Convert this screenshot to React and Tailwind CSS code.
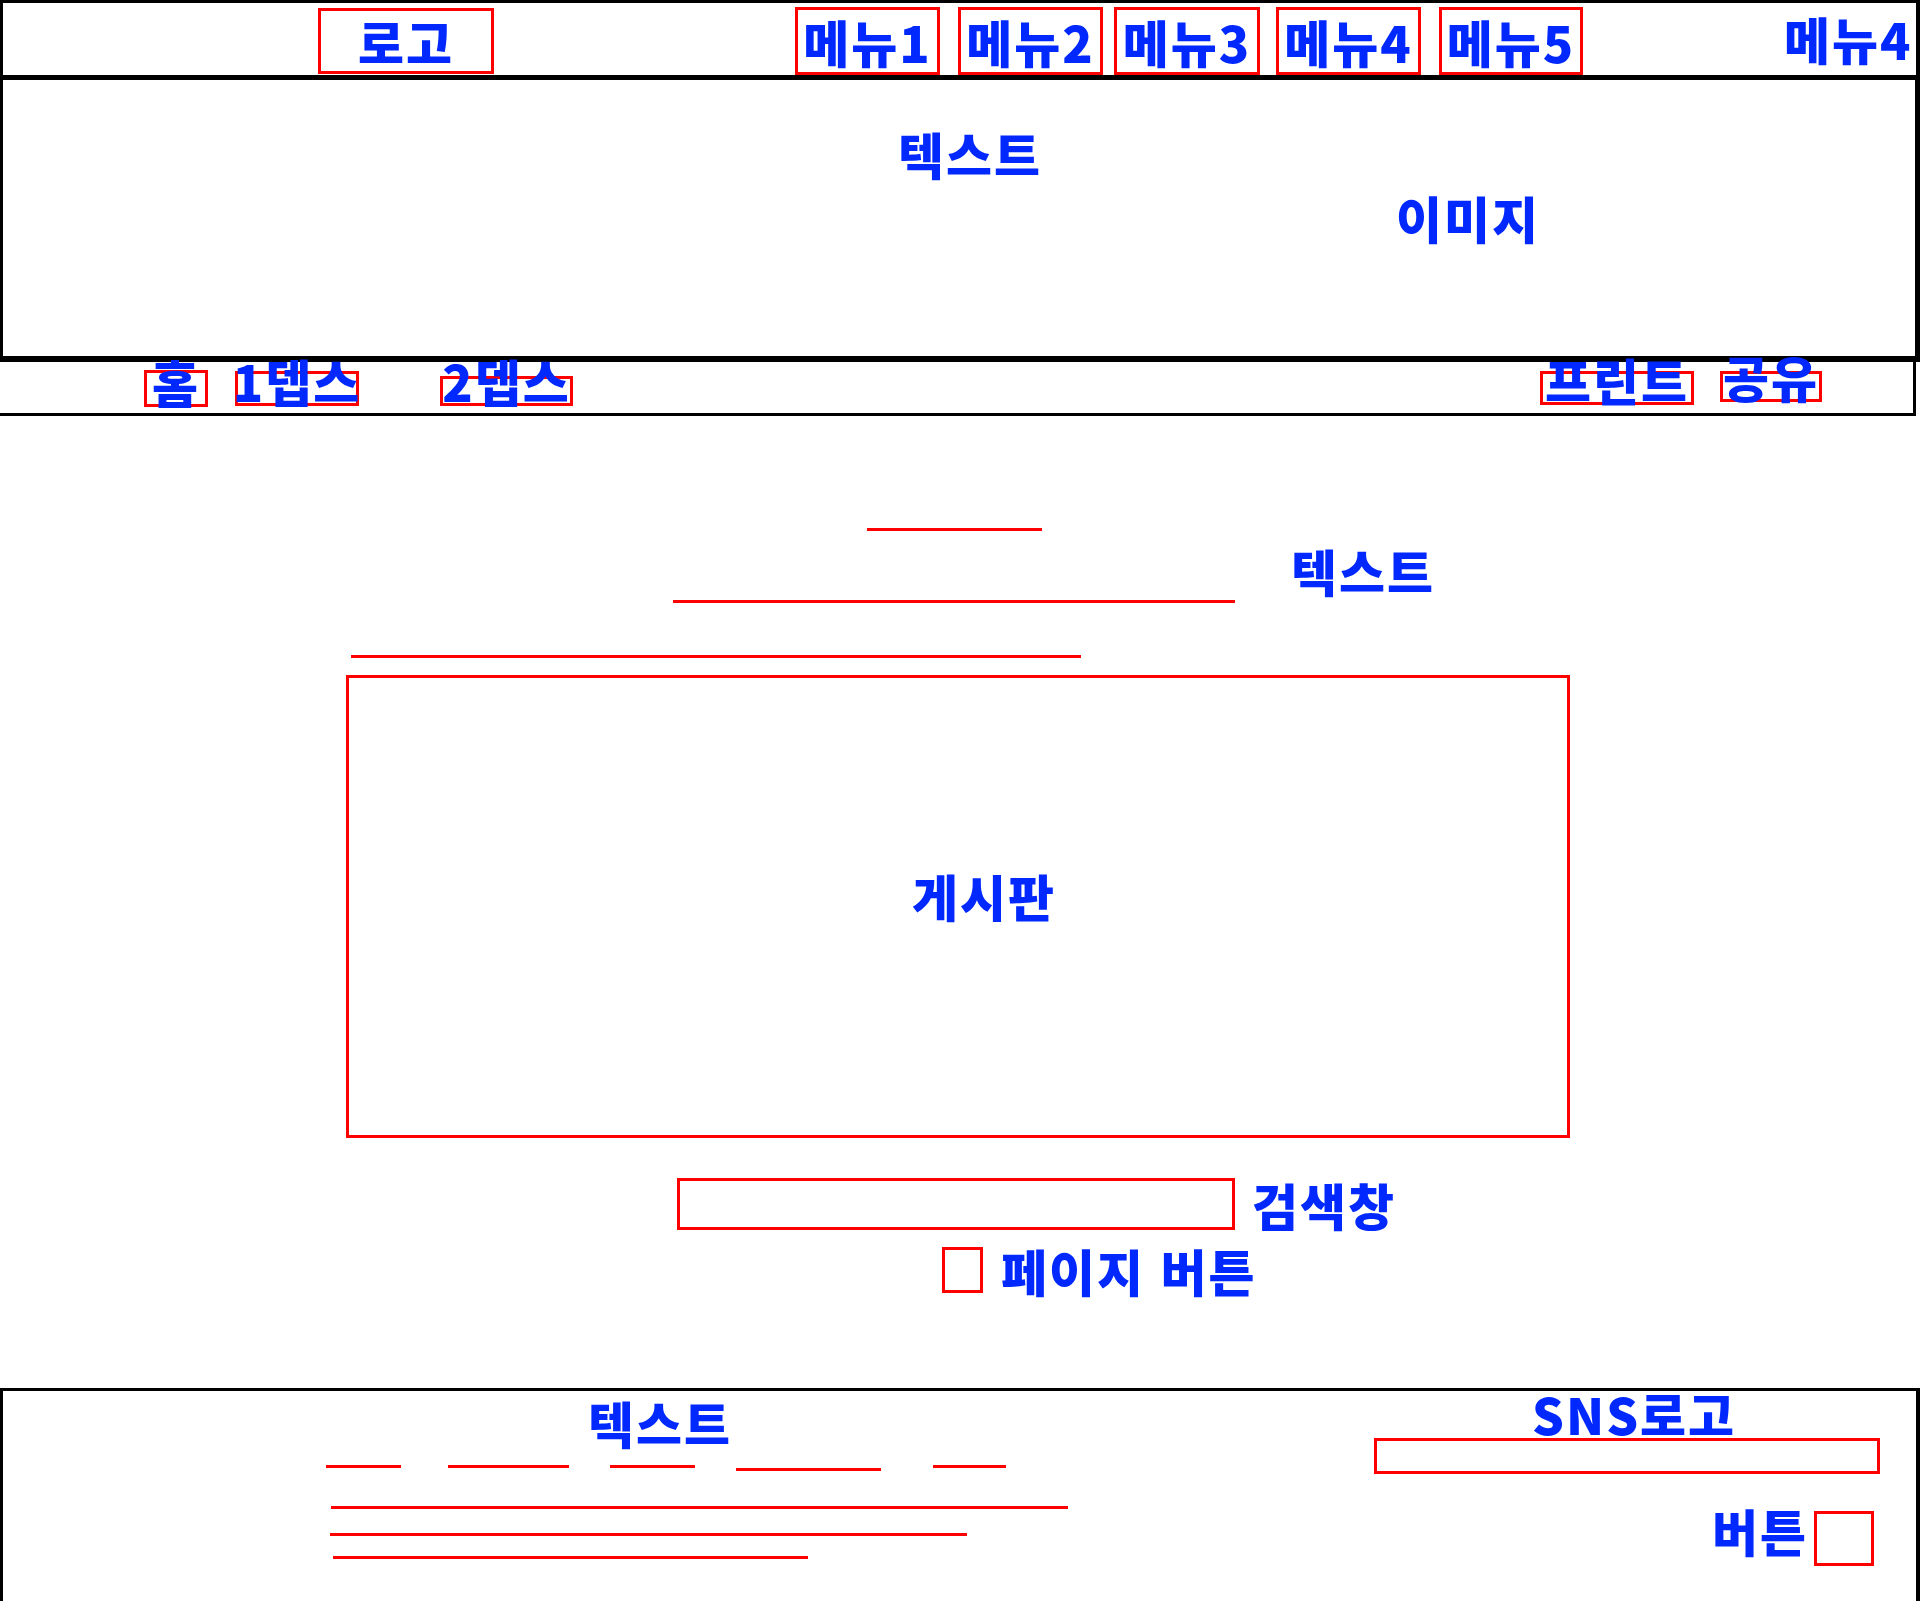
import React from 'react'

const T = ({ children, className = '' }) => (
  <span className={`block leading-none text-[50px] tracking-[2px] font-black text-[#0028ff] whitespace-nowrap ${className}`}>
    {children}
  </span>
)

const Line = ({ className = '' }) => <div className={`h-[3px] bg-[#ff0000] ${className}`} />

const menus = [
  { label: '메뉴1', cls: 'ml-[301px] w-[145px]' },
  { label: '메뉴2', cls: 'ml-[18px] w-[145px]' },
  { label: '메뉴3', cls: 'ml-[11px] w-[146px]' },
  { label: '메뉴4', cls: 'ml-[16px] w-[145px]' },
  { label: '메뉴5', cls: 'ml-[18px] w-[144px]' }
]

const crumbs = [
  { label: '홈', cls: 'ml-[144px] w-[64px] h-[37px] mt-[8px]' },
  { label: '1뎁스', cls: 'ml-[27px] w-[124px] h-[35px] mt-[9px]' },
  { label: '2뎁스', cls: 'ml-[81px] w-[133px] h-[30px] mt-[14px]' },
  { label: '프린트', cls: 'ml-[967px] w-[154px] h-[34px] mt-[9px]' },
  { label: '공유', cls: 'ml-[26px] w-[102px] h-[31px] mt-[9px]' }
]

export default function App() {
  return (
    <div className="w-[1920px] h-[1601px] bg-white flex flex-col overflow-hidden font-['Noto_Sans_CJK_KR',sans-serif]">
      {/* Header */}
      <header className="h-[75px] shrink-0 border-t-[3px] border-l-[3px] border-r-[4px] border-black flex items-start">
        <div className="ml-[315px] mt-[5px] w-[176px] h-[66px] border-[3px] border-[#ff0000] flex items-center justify-center">
          <T>로고</T>
        </div>
        {menus.map(m => (
          <div key={m.label} className={`${m.cls} mt-[4px] h-[68px] border-[3px] border-[#ff0000] flex items-center justify-center`}>
            <T>{m.label}</T>
          </div>
        ))}
        <T className="ml-[201px] mt-[10px]">메뉴4</T>
      </header>

      {/* Hero */}
      <section className="h-[287px] shrink-0 border-t-[5px] border-b-[6px] border-l-[3px] border-r-[5px] border-black">
        <T className="ml-[895px] mt-[48px]">텍스트</T>
        <T className="ml-[1393px] mt-[14px]">이미지</T>
      </section>

      {/* Breadcrumb */}
      <nav className="h-[54px] w-[1916px] shrink-0 border-b-[3px] border-r-[3px] border-black flex items-start">
        {crumbs.map(c => (
          <div key={c.label} className={`${c.cls} border-[3px] border-[#ff0000] flex items-end justify-center`}>
            <T className="-mb-[2px]">{c.label}</T>
          </div>
        ))}
      </nav>

      {/* Content */}
      <main className="h-[972px] shrink-0">
        <Line className="ml-[867px] mt-[112px] w-[175px]" />
        <T className="ml-[1291px] mt-[14px]">텍스트</T>
        <Line className="ml-[673px] mt-[5px] w-[562px]" />
        <Line className="ml-[351px] mt-[52px] w-[730px]" />
        <div className="ml-[346px] mt-[17px] w-[1224px] h-[463px] border-[3px] border-[#ff0000] flex items-center justify-center pl-[52px] pb-[24px]">
          <T>게시판</T>
        </div>
        <div className="mt-[40px] flex items-center">
          <div className="ml-[677px] w-[558px] h-[52px] border-[3px] border-[#ff0000]" />
          <T className="ml-[17px]">검색창</T>
        </div>
        <div className="mt-[15px] flex items-center">
          <div className="ml-[942px] w-[41px] h-[46px] border-[3px] border-[#ff0000]" />
          <T className="ml-[18px] [word-spacing:2px]">페이지 버튼</T>
        </div>
      </main>

      {/* Footer */}
      <footer className="flex-1 border-t-[3px] border-l-[3px] border-r-[4px] border-black flex">
        <div className="w-[1371px] shrink-0">
          <T className="ml-[585px] mt-[6px]">텍스트</T>
          <div className="mt-[18px] ml-[323px] flex items-start">
            <Line className="w-[75px]" />
            <Line className="ml-[47px] w-[121px]" />
            <Line className="ml-[41px] w-[85px]" />
            <Line className="ml-[41px] w-[145px] mt-[3px]" />
            <Line className="ml-[52px] w-[73px]" />
          </div>
          <Line className="ml-[328px] mt-[35px] w-[737px]" />
          <Line className="ml-[327px] mt-[24px] w-[637px]" />
          <Line className="ml-[330px] mt-[20px] w-[475px]" />
        </div>
        <div className="flex-1">
          <T className="ml-[158px] -mt-[3px] tracking-[1px]">SNS로고</T>
          <div className="w-[506px] h-[36px] border-[3px] border-[#ff0000]" />
          <div className="flex items-start">
            <T className="ml-[338px] mt-[31px]">버튼</T>
            <div className="ml-[6px] mt-[37px] w-[60px] h-[55px] border-[3px] border-[#ff0000]" />
          </div>
        </div>
      </footer>
    </div>
  )
}
